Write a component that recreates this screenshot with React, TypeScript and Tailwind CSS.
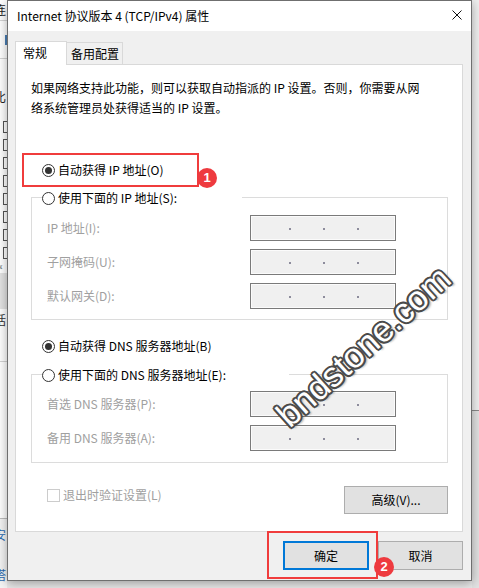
import React from 'react';

const font = "font-['Noto_Sans_CJK_SC','Microsoft_YaHei',sans-serif]";

const Radio = ({ checked }: { checked?: boolean }) => (
  <span className="w-[13px] h-[13px] rounded-full border border-[#333] bg-white flex items-center justify-center shrink-0">
    {checked && <span className="w-[7px] h-[7px] rounded-full bg-[#333]" />}
  </span>
);

const RadioRow = ({ checked, label }: { checked?: boolean; label: string }) => (
  <div className="flex items-center gap-[3px] h-[16px] text-[12px] leading-[16px] text-black">
    <Radio checked={checked} />
    <span>{label}</span>
  </div>
);

const Badge = ({ n, className }: { n: string; className: string }) => (
  <span
    className={`absolute w-[20px] h-[20px] rounded-full bg-[#ee3a3f] text-white flex items-center justify-center text-[13px] font-bold font-['Liberation_Sans',sans-serif] ${className}`}
  >
    {n}
  </span>
);

const IpBox = () => (
  <div className="w-[146px] h-[26px] border border-[#7a7a7a] bg-[#f0f0f0] shadow-[inset_0_0_0_1px_#fbfbfb] flex items-center pl-[38px] gap-[32px] pt-[2px]">
    <span className="w-[2px] h-[2px] bg-[#8d8c9c]" />
    <span className="w-[2px] h-[2px] bg-[#8d8c9c]" />
    <span className="w-[2px] h-[2px] bg-[#8d8c9c]" />
  </div>
);

const FieldRow = ({ label }: { label: string }) => (
  <div className="flex items-center h-[26px]">
    <span className="w-[218px] pl-[15px] text-[12px] text-[#a0a0a0]">{label}</span>
    <IpBox />
  </div>
);

const GroupBox = ({
  legend,
  legendWidth,
  rows,
  pt,
  pb,
}: {
  legend: string;
  legendWidth: string;
  rows: string[];
  pt: string;
  pb: string;
}) => (
  <div className={`relative ml-[15px] w-[417px] border border-[#dcdcdc] flex flex-col gap-[8px] ${pt} ${pb}`}>
    <div className={`absolute -top-[8px] left-[10px] bg-white ${legendWidth}`}>
      <RadioRow label={legend} />
    </div>
    {rows.map((r) => (
      <FieldRow key={r} label={r} />
    ))}
  </div>
);

export default function App() {
  return (
    <div className={`relative w-[479px] h-[588px] overflow-hidden bg-[#e9e9e9] flex ${font}`}>
      {/* window behind, left edge */}
      <div className="w-[7px] h-full bg-white flex flex-col overflow-hidden text-[12px] leading-none shrink-0">
        <div className="h-[20px] flex items-center -ml-[6px] text-[#222]">连</div>
        <div className="h-px bg-[#d4d4d4]" />
        <div className="h-[37px] flex items-center justify-end">
          <span className="w-[2px] h-[10px] bg-[#4a7fb5]" />
        </div>
        <div className="h-px bg-[#d4d4d4]" />
        <div className="h-[60px] flex items-center -ml-[6px] pt-[16px] text-[#222]">比</div>
        <div className="flex flex-col gap-[6px] pl-[3px] pt-[2px]">
          {[0, 1, 2, 3, 4, 5, 6, 7].map((i) => (
            <span key={i} className="w-[10px] h-[12px] border border-[#555] bg-white" />
          ))}
        </div>
        <div className="h-[14px] flex items-center text-[#555] text-[10px] -ml-[2px]">«</div>
        <div className="h-[36px] bg-[#e3e3e3]" />
        <div className="h-[22px] flex items-center -ml-[6px] text-[#333]">括</div>
        <div className="h-[30px]" />
        <div className="h-px bg-[#d4d4d4]" />
        <div className="h-[156px]" />
        <div className="h-px bg-[#bdbdbd]" />
        <div className="flex-1 bg-[#f4f4f4] flex flex-col">
          <div className="h-[22px] flex items-end -ml-[6px] text-[#2a6ab0]">安</div>
          <div className="h-[40px] flex items-end -ml-[6px] text-[#2a6ab0]">塔</div>
        </div>
      </div>

      {/* dialog */}
      <div className="relative z-10 w-[465px] h-[581px] shrink-0 border border-[#6f6f6f] bg-[#f0f0f0] flex flex-col shadow-[0_2px_10px_rgba(0,0,0,0.35)]">
        <div className="h-[30px] bg-white flex items-center justify-between pl-[9px] pr-[9px] text-[12px] text-black">
          <span>Internet 协议版本 4 (TCP/IPv4) 属性</span>
          <svg width="10" height="10" viewBox="0 0 10 10" className="mt-[-2px]">
            <path d="M0.5 0.5 L9.5 9.5 M9.5 0.5 L0.5 9.5" stroke="#111" strokeWidth="1" />
          </svg>
        </div>

        <div className="flex flex-col pt-[10px] pl-[7px] pr-[8px]">
          {/* tabs */}
          <div className="flex items-end h-[23px] text-[12px] text-black">
            <div className="relative z-10 h-[24px] w-[52px] mb-[-1px] bg-white border-t border-x border-[#d9d9d9] flex items-center pl-[7px] pb-[2px]">
              常规
            </div>
            <div className="h-[22px] w-[57px] -ml-px bg-[#f0f0f0] border-t border-x border-[#d9d9d9] flex items-center pl-[4px]">
              备用配置
            </div>
          </div>

          {/* panel */}
          <div className="h-[468px] bg-white border border-[#d9d9d9] flex flex-col">
            <p className="mt-[13px] pl-[15px] text-[12px] leading-[20px] text-black">
              如果网络支持此功能，则可以获取自动指派的 IP 设置。否则，你需要从网
              <br />
              络系统管理员处获得适当的 IP 设置。
            </p>

            <div className="relative mt-[35px] ml-[6px] w-[177px] h-[34px] border-2 border-[#f03c3c] flex items-center pl-[18px]">
              <RadioRow checked label="自动获得 IP 地址(O)" />
              <Badge n="1" className="left-[173px] top-[13px]" />
            </div>

            <div className="mt-[10px]">
              <GroupBox
                legend="使用下面的 IP 地址(S):"
                legendWidth="w-[200px]"
                rows={['IP 地址(I):', '子网掩码(U):', '默认网关(D):']}
                pt="pt-[17px]"
                pb="pb-[10px]"
              />
            </div>

            <div className="mt-[18px] ml-[26px]">
              <RadioRow checked label="自动获得 DNS 服务器地址(B)" />
            </div>

            <div className="mt-[20px]">
              <GroupBox
                legend="使用下面的 DNS 服务器地址(E):"
                legendWidth="w-[247px]"
                rows={['首选 DNS 服务器(P):', '备用 DNS 服务器(A):']}
                pt="pt-[16px]"
                pb="pb-[11px]"
              />
            </div>

            <div className="mt-[23px] flex items-start justify-between pl-[31px] pr-[14px]">
              <div className="flex items-center gap-[3px] h-[16px] mt-[1px] text-[12px] text-[#a0a0a0]">
                <span className="w-[13px] h-[13px] border border-[#cccccc] bg-white" />
                <span>退出时验证设置(L)</span>
              </div>
              <button className="w-[104px] h-[28px] border border-[#adadad] bg-[#e1e1e1] text-[12px] text-black flex items-center justify-center">
                高级(V)...
              </button>
            </div>
          </div>

          {/* footer */}
          <div className="mt-[9px] flex justify-end gap-[9px]">
            <div className="relative">
              <button className="w-[86px] h-[29px] border-2 border-[#0078d7] bg-[#e1e1e1] text-[12px] text-black flex items-center justify-center">
                确定
              </button>
              <span className="absolute -left-[16px] -top-[10px] w-[111px] h-[48px] border-2 border-[#f03c3c]" />
              <Badge n="2" className="left-[91px] top-[16px]" />
            </div>
            <button className="w-[85px] h-[29px] border border-[#adadad] bg-[#e1e1e1] text-[12px] text-black flex items-center justify-center">
              取消
            </button>
          </div>
        </div>
      </div>

      {/* window behind, right edge */}
      <div className="w-[7px] h-full flex flex-col shrink-0">
        <div className="h-[410px] bg-[#f0f0f0]" />
        <div className="h-px bg-[#8a8a8a]" />
        <div className="flex-1 bg-[#e2e2e2]" />
      </div>

      {/* watermark */}
      <div className="absolute z-20 left-[363px] top-[346px] -translate-x-1/2 -translate-y-1/2 rotate-[-42deg] whitespace-nowrap text-[35px] leading-none text-white font-['Liberation_Sans',sans-serif] [text-shadow:-2px_0_0_#4a4a4a,2px_0_0_#4a4a4a,0_-2px_0_#4a4a4a,0_2px_0_#4a4a4a,-1.5px_-1.5px_0_#4a4a4a,1.5px_-1.5px_0_#4a4a4a,-1.5px_1.5px_0_#4a4a4a,1.5px_1.5px_0_#4a4a4a,2px_3px_2px_rgba(0,0,0,0.3)]">
        bndstone.com
      </div>
    </div>
  );
}
